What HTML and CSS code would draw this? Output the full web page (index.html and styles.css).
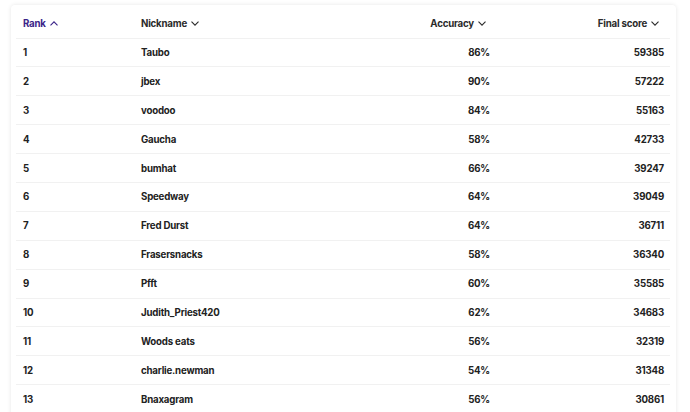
FILE: index.html
```html
<!DOCTYPE html>
<html>
<head>
<meta charset="utf-8">
<link rel="stylesheet" href="styles.css">
</head>
<body>
<div class="card">
  <div class="board">
    <div class="row head">
      <div class="cell active">Rank <svg class="chev" viewBox="0 0 8 5"><path d="M0.5 4.3 L4 0.8 L7.5 4.3"/></svg></div>
      <div class="cell">Nickname <svg class="chev" viewBox="0 0 8 5"><path d="M0.5 0.7 L4 4.2 L7.5 0.7"/></svg></div>
      <div class="cell num">Accuracy <svg class="chev" viewBox="0 0 8 5"><path d="M0.5 0.7 L4 4.2 L7.5 0.7"/></svg></div>
      <div class="cell num last">Final score <svg class="chev" viewBox="0 0 8 5"><path d="M0.5 0.7 L4 4.2 L7.5 0.7"/></svg></div>
    </div>
    <div class="row"><div class="cell">1</div><div class="cell">Taubo</div><div class="cell num">86%</div><div class="cell num last">59385</div></div>
    <div class="row"><div class="cell">2</div><div class="cell">jbex</div><div class="cell num">90%</div><div class="cell num last">57222</div></div>
    <div class="row"><div class="cell">3</div><div class="cell">voodoo</div><div class="cell num">84%</div><div class="cell num last">55163</div></div>
    <div class="row"><div class="cell">4</div><div class="cell">Gaucha</div><div class="cell num">58%</div><div class="cell num last">42733</div></div>
    <div class="row"><div class="cell">5</div><div class="cell">bumhat</div><div class="cell num">66%</div><div class="cell num last">39247</div></div>
    <div class="row"><div class="cell">6</div><div class="cell">Speedway</div><div class="cell num">64%</div><div class="cell num last">39049</div></div>
    <div class="row"><div class="cell">7</div><div class="cell">Fred Durst</div><div class="cell num">64%</div><div class="cell num last">36711</div></div>
    <div class="row"><div class="cell">8</div><div class="cell">Frasersnacks</div><div class="cell num">58%</div><div class="cell num last">36340</div></div>
    <div class="row"><div class="cell">9</div><div class="cell">Pfft</div><div class="cell num">60%</div><div class="cell num last">35585</div></div>
    <div class="row"><div class="cell">10</div><div class="cell">Judith_Priest420</div><div class="cell num">62%</div><div class="cell num last">34683</div></div>
    <div class="row"><div class="cell">11</div><div class="cell">Woods eats</div><div class="cell num">56%</div><div class="cell num last">32319</div></div>
    <div class="row"><div class="cell">12</div><div class="cell">charlie.newman</div><div class="cell num">54%</div><div class="cell num last">31348</div></div>
    <div class="row"><div class="cell">13</div><div class="cell">Bnaxagram</div><div class="cell num">56%</div><div class="cell num last">30861</div></div>
  </div>
</div>
</body>
</html>
```
FILE: styles.css
```css
html, body {
  margin: 0;
  padding: 0;
  background: #ffffff;
}
body {
  font-family: "Inter", "DejaVu Sans", sans-serif;
  font-weight: 700;
  font-size: 9.7px;
  letter-spacing: -0.2px;
  color: #222222;
  padding: 5px 14px 0 11px;
}
.card {
  background: #fff;
  border-radius: 4px;
  box-shadow: 0 0 4px rgba(0,0,0,0.10);
  padding: 0 6px 0 5px;
  height: 420px;
}
.row {
  display: grid;
  grid-template-columns: 118px 243px 120px 173px;
  height: 28.9px;
  border-top: 1px solid #f1f1f1;
  box-sizing: border-box;
  align-items: center;
}
.row.head {
  height: 32.5px;
  border-top: none;
  color: #2b2b2b;
  padding-top: 4px;
}
.cell {
  padding: 0 7px;
  white-space: nowrap;
  display: flex;
  align-items: center;
}
.cell.num {
  justify-content: flex-end;
}
.cell.last {
  padding-right: 6px;
}
.head .cell.num {
  padding-right: 11px;
}
.head .cell.active {
  color: #3b2488;
}
.chev {
  width: 8px;
  height: 5px;
  margin-left: 4px;
  fill: none;
  stroke: currentColor;
  stroke-width: 1.1;
}
```
